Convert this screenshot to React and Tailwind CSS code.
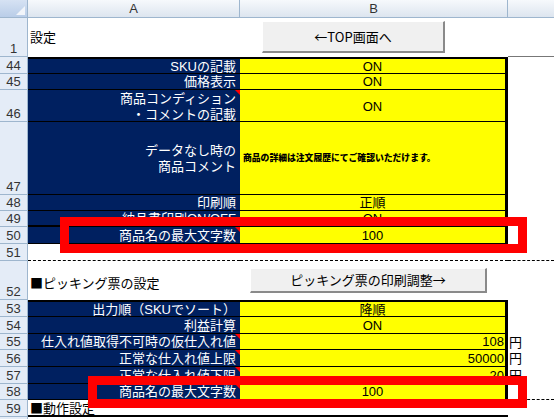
import React from "react";

const FONT = "font-['Liberation_Sans','Noto_Sans_CJK_JP',sans-serif]";
const CJK = "font-['Noto_Sans_CJK_JP',sans-serif]";

function Tri() {
  return (
    <span className="absolute top-0 right-0 w-0 h-0 border-l-[5px] border-l-transparent border-t-[5px] border-t-[#ff0000]" />
  );
}

function Row({ num, h, a, b, c, aCls, bCls, cCls = "" }) {
  return (
    <div className={`flex ${h}`}>
      <div className="w-[28px] shrink-0 bg-[#e4ecf7] border-r border-b border-[#9eb6ce] flex items-end justify-center text-[13px] leading-[15px] text-[#333]">
        {num}
      </div>
      <div className={`w-[212px] shrink-0 relative ${aCls}`}>{a}</div>
      <div className={`w-[268px] shrink-0 ${bCls}`}>{b}</div>
      <div className={`flex-1 ${cCls}`}>{c}</div>
    </div>
  );
}

const navy =
  "bg-[#002060] text-white border-b border-black flex items-center justify-end pr-[4px] text-[13px] leading-[15px] whitespace-nowrap";
const yel =
  "bg-[#ffff00] text-black border-b border-r-[3px] border-black flex items-center justify-center text-[13px] leading-[15px] whitespace-nowrap";
const yelR =
  "bg-[#ffff00] text-black border-b border-r-[3px] border-black flex items-center justify-end pr-[1px] text-[13px] leading-[15px]";
const yen = "flex items-center pl-[1px] text-[13px] leading-[15px]";

export default function App() {
  return (
    <div className={`relative w-[554px] h-[419px] overflow-hidden bg-white text-black ${FONT}`}>
      {/* column header */}
      <div className="flex h-[18px] bg-linear-to-b from-[#f6f9fc] to-[#dde5ef] border-b border-[#9eb6ce] text-[13px] leading-[15px] text-[#333]">
        <div className="w-[28px] shrink-0 border-r border-[#9eb6ce] bg-linear-to-b from-[#d6e2f3] to-[#b9cde8] relative">
          <svg className="absolute right-[2px] bottom-[2px]" width="9" height="9" viewBox="0 0 9 9">
            <polygon points="9,0 9,9 0,9" fill="#f2f5fa" />
          </svg>
        </div>
        <div className="w-[212px] shrink-0 border-r border-[#9eb6ce] flex items-center justify-center">A</div>
        <div className="w-[268px] shrink-0 border-r border-[#9eb6ce] flex items-center justify-center">B</div>
        <div className="flex-1" />
      </div>

      <Row
        num="1"
        h="h-[39px]"
        aCls="flex items-center pl-[2px] text-[13px]"
        a="設定"
        bCls=""
        cCls="border-b border-[#777]"
      />
      <Row num="44" h="h-[17px]" aCls={`${navy} border-t-2`} a="SKUの記載" bCls={`${yel} border-t-2`} b="ON" />
      <Row num="45" h="h-[16px]" aCls={navy} a="価格表示" bCls={yel} b="ON" />
      <Row
        num="46"
        h="h-[32px]"
        aCls={`${navy} text-right`}
        a={
          <>
            <span className="leading-[16px] pt-[2px]">
              商品コンディション
              <br />
              ・コメントの記載
            </span>
            <Tri />
          </>
        }
        bCls={`${yel} pt-[2px]`}
        b="ON"
      />
      <Row
        num="47"
        h="h-[73px]"
        aCls={`${navy} text-right`}
        a={
          <span className="leading-[16px] pt-[2px]">
            データなし時の
            <br />
            商品コメント
          </span>
        }
        bCls={`bg-[#ffff00] border-b border-r-[3px] border-black flex items-center pl-[3px] text-[8.8px] font-black leading-[10px] whitespace-nowrap ${CJK}`}
        b="商品の詳細は注文履歴にてご確認いただけます。"
      />
      <Row num="48" h="h-[16px]" aCls={navy} a="印刷順" bCls={yel} b="正順" />
      <Row num="49" h="h-[16px]" aCls={`${navy} border-b-2`} a="納品書印刷ON/OFF" bCls={`${yel} border-b-2`} b="ON" />
      <Row
        num="50"
        h="h-[17px]"
        aCls={navy}
        a={
          <>
            商品名の最大文字数
            <Tri />
          </>
        }
        bCls={yel}
        b="100"
      />
      <Row
        num="51"
        h="h-[17px]"
        aCls="border-b border-dashed border-black"
        bCls="border-b border-dashed border-black"
        cCls="border-b border-dashed border-black"
      />
      <Row
        num="52"
        h="h-[39px]"
        aCls={`flex items-center pl-[2px] pt-[4px] text-[13px] whitespace-nowrap ${CJK}`}
        a="■ピッキング票の設定"
        bCls=""
      />
      <Row num="53" h="h-[17px]" aCls={`${navy} border-t-2`} a="出力順（SKUでソート）" bCls={`${yel} border-t-2`} b="降順" />
      <Row num="54" h="h-[17px]" aCls={navy} a="利益計算" bCls={yel} b="ON" />
      <Row
        num="55"
        h="h-[16px]"
        aCls={navy}
        a={
          <>
            仕入れ値取得不可時の仮仕入れ値
            <Tri />
          </>
        }
        bCls={yelR}
        b="108"
        cCls={yen}
        c="円"
      />
      <Row
        num="56"
        h="h-[17px]"
        aCls={navy}
        a={
          <>
            正常な仕入れ値上限
            <Tri />
          </>
        }
        bCls={yelR}
        b="50000"
        cCls={yen}
        c="円"
      />
      <Row
        num="57"
        h="h-[17px]"
        aCls={navy}
        a={
          <>
            正常な仕入れ値下限
            <Tri />
          </>
        }
        bCls={yelR}
        b="20"
        cCls={yen}
        c="円"
      />
      <Row
        num="58"
        h="h-[16px]"
        aCls={navy}
        a={
          <>
            商品名の最大文字数
            <Tri />
          </>
        }
        bCls={yel}
        b="100"
        cCls="border-b border-dashed border-black"
      />
      <Row
        num="59"
        h="h-[17px]"
        aCls={`flex items-center pl-[2px] text-[13px] leading-[15px] border-b-2 border-black whitespace-nowrap ${CJK}`}
        a="■動作設定"
        bCls="border-b-2 border-black"
      />
      <div className="flex h-[4px]">
        <div className="w-[28px] shrink-0 bg-[#e4ecf7] border-r border-[#9eb6ce]" />
      </div>

      {/* floating buttons */}
      <div className={`absolute left-[262px] top-[21px] w-[183px] h-[32px] bg-[#f0f0f0] border-r-2 border-b-2 border-[#8a8a8a] border-t border-l border-t-white border-l-white flex items-center justify-center text-[13px] ${CJK}`}>
        ←TOP画面へ
      </div>
      <div className={`absolute left-[250px] top-[268px] w-[237px] h-[25px] bg-[#f0f0f0] border-r-2 border-b-2 border-[#8a8a8a] border-t border-l border-t-white border-l-white flex items-center justify-center text-[13px] ${CJK}`}>
        ピッキング票の印刷調整→
      </div>

      {/* red highlight boxes */}
      <div className="absolute left-[60px] top-[217px] w-[467px] h-[36px] border-[9px] border-[#ff0000]" />
      <div className="absolute left-[88px] top-[376px] w-[439px] h-[32px] border-[9px] border-[#ff0000]" />
    </div>
  );
}
